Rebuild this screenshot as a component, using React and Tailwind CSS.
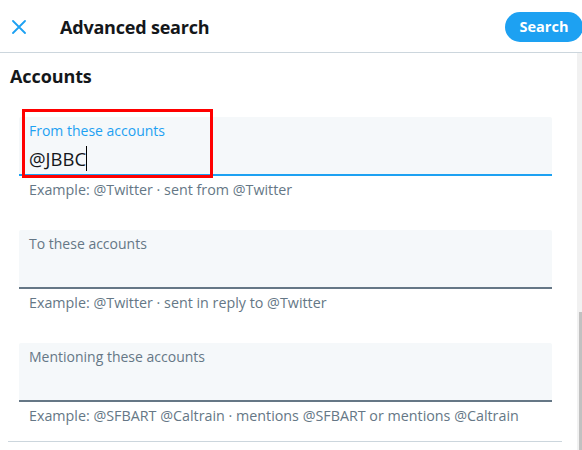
export default function App() {
    const fields = [
        { label: "From these accounts", value: "@JBBC", hint: "Example: @Twitter · sent from @Twitter", active: true },
        { label: "To these accounts", value: "", hint: "Example: @Twitter · sent in reply to @Twitter" },
        { label: "Mentioning these accounts", value: "", hint: "Example: @SFBART @Caltrain · mentions @SFBART or mentions @Caltrain" },
    ];

    return (
        <div className="h-[450px] w-[582px] overflow-hidden bg-white font-['Open_Sans',sans-serif] text-[#14171a]">
            {/* header */}
            <div className="flex h-[53px] items-start border-b border-[#ccd6dd]">
                <svg className="ml-[12px] mt-[20px]" width="14" height="14" viewBox="0 0 14 14">
                    <path d="M1 1L13 13M13 1L1 13" stroke="#1da1f2" strokeWidth="1.8" strokeLinecap="round" />
                </svg>
                <h1 className="ml-[34px] mt-[15px] text-[18px] leading-[25px] font-bold tracking-[-0.2px]">Advanced search</h1>
                <button className="ml-auto mr-[-1px] mt-[12px] h-[30px] w-[78px] rounded-full bg-[#1da1f2] text-[14.5px] font-bold text-white">
                    Search
                </button>
            </div>

            <div className="flex h-[397px]">
                <main className="flex-1">
                    <h2 className="ml-[10px] mt-[11px] text-[18px] leading-[24px] font-bold tracking-[-0.1px]">Accounts</h2>

                    <div className="mt-[29px]">
                        {fields.map((f, i) => (
                            <div key={f.label} className={i > 0 ? "mt-[30px]" : ""}>
                                <div
                                    className={
                                        "relative ml-[19px] h-[59px] w-[533px] rounded-t-[2px] border-b-2 bg-[#f5f8fa] px-[10px] pt-[4px] " +
                                        (f.active ? "border-[#1da1f2]" : "border-[#657786]")
                                    }
                                >
                                    <div className={"text-[14px] leading-[20px] " + (f.active ? "text-[#1da1f2]" : "text-[#657786]")}>
                                        {f.label}
                                    </div>
                                    {f.value && (
                                        <div className="mt-[5px] flex items-center text-[18.5px] leading-[24px]">
                                            <span>{f.value}</span>
                                            <span className="h-[25px] w-px bg-black" />
                                        </div>
                                    )}
                                    {f.active && (
                                        <div className="absolute left-[3px] top-[-8px] h-[69px] w-[191px] border-[3px] border-[#ff0000]" />
                                    )}
                                </div>
                                <p className="ml-[29px] pt-[4px] text-[14.3px] leading-[20px] text-[#657786]">{f.hint}</p>
                            </div>
                        ))}
                    </div>

                    <div className="ml-[8px] mt-[15px] w-[554px] border-t border-[#ccd6dd]" />
                </main>

                {/* scrollbar */}
                <div className="flex w-[5px] flex-col bg-[#f1f1f1]">
                    <div className="ml-[2px] mt-[259px] flex-1 bg-[#c1c1c1]" />
                </div>
            </div>
        </div>
    );
}
